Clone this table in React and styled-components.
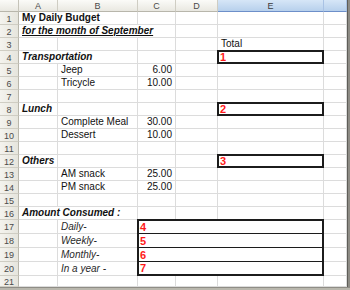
import React from "react";
import styled, { createGlobalStyle, css } from "styled-components";

const GlobalStyle = createGlobalStyle`
  html, body {
    margin: 0;
    padding: 0;
    background: #ffffff;
  }
  body {
    width: 350px;
    height: 290px;
    overflow: hidden;
    font-family: "Liberation Sans", Arial, sans-serif;
  }
`;

const COLS = ["A", "B", "C", "D", "E", "F"];

// rows of the sheet: col index (0 = A), span, text and how it looks
const SHEET = [
  [{ col: 0, span: 2, text: "My Daily Budget", bold: true }],
  [{ col: 0, span: 3, text: "for the month of September", bold: true, italic: true, underline: true }],
  [{ col: 4, text: "Total" }],
  [
    { col: 0, span: 2, text: "Transportation", bold: true, italic: true },
    { col: 4, text: "1", box: "single" },
  ],
  [
    { col: 1, text: "Jeep" },
    { col: 2, text: "6.00", right: true },
  ],
  [
    { col: 1, text: "Tricycle" },
    { col: 2, text: "10.00", right: true },
  ],
  [],
  [
    { col: 0, text: "Lunch", bold: true, italic: true },
    { col: 4, text: "2", box: "single" },
  ],
  [
    { col: 1, text: "Complete Meal" },
    { col: 2, text: "30.00", right: true },
  ],
  [
    { col: 1, text: "Dessert" },
    { col: 2, text: "10.00", right: true },
  ],
  [],
  [
    { col: 0, text: "Others", bold: true, italic: true },
    { col: 4, text: "3", box: "single" },
  ],
  [
    { col: 1, text: "AM snack" },
    { col: 2, text: "25.00", right: true },
  ],
  [
    { col: 1, text: "PM snack" },
    { col: 2, text: "25.00", right: true },
  ],
  [],
  [{ col: 0, span: 2, text: "Amount Consumed :", bold: true, italic: true }],
  [
    { col: 1, text: "Daily-", italic: true },
    { col: 2, span: 3, text: "4", box: "first" },
  ],
  [
    { col: 1, text: "Weekly-", italic: true },
    { col: 2, span: 3, text: "5", box: "middle" },
  ],
  [
    { col: 1, text: "Monthly-", italic: true },
    { col: 2, span: 3, text: "6", box: "middle" },
  ],
  [
    { col: 1, text: "In a year -", italic: true },
    { col: 2, span: 3, text: "7", box: "last" },
  ],
  [],
];

const Window = styled.div`
  display: flex;
  flex-direction: column;
  width: 350px;
  height: 290px;
`;

const SheetArea = styled.div`
  display: flex;
  flex: 1;
  min-height: 0;
`;

const Grid = styled.div`
  display: grid;
  grid-template-columns: 19px 39px 80px 38px 42px 106px 23px;
  grid-template-rows: 12px repeat(16, 13px) repeat(4, 14px) 11px;
  width: 347px;
  overflow: hidden;
`;

const EdgeStrip = styled.div`
  width: 3px;
  background: #8d8b84;
  border-left: 1px solid #5e5d58;
  box-sizing: border-box;
`;

const BottomBar = styled.div`
  height: 3px;
  background: #b9b7ad;
  border-top: 1px solid #8f8d86;
  box-sizing: border-box;
`;

const headerBase = css`
  display: flex;
  align-items: center;
  justify-content: center;
  font-size: 9px;
  color: #4a4a4a;
  box-sizing: border-box;
  background: linear-gradient(#fbfbf8, #e9e8e1);
`;

const Corner = styled.div`
  ${headerBase};
  border-right: 1px solid #c5c3b8;
  border-bottom: 1px solid #b8b6ab;
`;

const ColHeader = styled.div`
  ${headerBase};
  border-right: 1px solid #cfcdc3;
  border-bottom: 1px solid #b8b6ab;
  overflow: hidden;
  ${(p) =>
    p.$selected &&
    css`
      background: linear-gradient(#d6e6f7, #b7d0ec);
      border-right-color: #a9c2e4;
      border-bottom: 1px solid #6d8fc9;
      color: #3a3a3a;
    `}
`;

const RowHeader = styled.div`
  ${headerBase};
  background: linear-gradient(90deg, #f4f3ee, #e6e5dd);
  border-right: 1px solid #b8b6ab;
  border-bottom: 1px solid #cfcdc3;
  padding-top: 1px;
`;

const Cell = styled.div`
  grid-column: span ${(p) => p.$span || 1};
  display: flex;
  align-items: flex-end;
  justify-content: ${(p) => (p.$right ? "flex-end" : "flex-start")};
  padding: 0 3px 1px 3px;
  box-sizing: border-box;
  border-right: 1px solid #dcdcdc;
  border-bottom: 1px solid #dcdcdc;
  font-size: 10px;
  line-height: 11px;
  white-space: nowrap;
  color: #111;
  font-weight: ${(p) => (p.$bold ? 700 : 400)};
  font-style: ${(p) => (p.$italic ? "italic" : "normal")};
  text-decoration: ${(p) => (p.$underline ? "underline" : "none")};
  ${(p) => p.$italic && !p.$bold && css`color: #2a2a2a;`}
`;

const BoxCell = styled.div`
  grid-column: span ${(p) => p.$span || 1};
  display: flex;
  align-items: center;
  padding: 0 0 0 1px;
  margin: -1px 0 0 -1px;
  box-sizing: border-box;
  border: 2px solid #1c1c1c;
  ${(p) =>
    p.$kind === "first" &&
    css`
      border-bottom-width: 1px;
      margin-bottom: 0;
    `}
  ${(p) =>
    p.$kind === "middle" &&
    css`
      border-top-width: 0;
      border-bottom-width: 1px;
      margin-top: 0;
    `}
  ${(p) =>
    p.$kind === "last" &&
    css`
      border-top-width: 0;
      margin-top: 0;
    `}
  font-size: 11px;
  font-weight: 700;
  color: #ff1a1a;
  background: #fff;
`;

const buildRow = (spec, rowIndex) => {
  const out = [];
  let col = 0;
  const sorted = [...spec].sort((a, b) => a.col - b.col);
  sorted.forEach((c, i) => {
    while (col < c.col) {
      out.push(<Cell key={`${rowIndex}-e${col}`} />);
      col++;
    }
    if (c.box) {
      out.push(
        <BoxCell key={`${rowIndex}-${i}`} $span={c.span} $kind={c.box}>
          {c.text}
        </BoxCell>
      );
    } else {
      out.push(
        <Cell
          key={`${rowIndex}-${i}`}
          $span={c.span}
          $bold={c.bold}
          $italic={c.italic}
          $underline={c.underline}
          $right={c.right}
        >
          {c.text}
        </Cell>
      );
    }
    col += c.span || 1;
  });
  while (col < COLS.length) {
    out.push(<Cell key={`${rowIndex}-e${col}`} />);
    col++;
  }
  return out;
};

const App = () => {
  return (
    <>
      <GlobalStyle />
      <Window>
        <SheetArea>
          <Grid>
            <Corner />
            {COLS.map((c) => (
              <ColHeader key={c} $selected={c === "E" || c === "F"}>
                {c === "F" ? "" : c}
              </ColHeader>
            ))}
            {SHEET.map((row, i) => (
              <React.Fragment key={i}>
                <RowHeader>{i + 1}</RowHeader>
                {buildRow(row, i)}
              </React.Fragment>
            ))}
          </Grid>
          <EdgeStrip />
        </SheetArea>
        <BottomBar />
      </Window>
    </>
  );
};

export default App;
